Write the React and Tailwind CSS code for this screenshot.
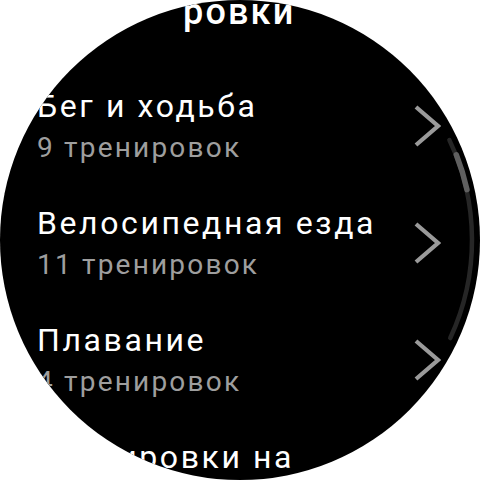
import React from "react";

const items = [
  { title: "Бег и ходьба", sub: "9 тренировок" },
  { title: "Велосипедная езда", sub: "11 тренировок" },
  { title: "Плавание", sub: "4 тренировок" },
  { title: "Тренировки на тренажерах", sub: "6 тренировок" },
];

function Chevron() {
  return (
    <svg width="28" height="44" viewBox="0 0 28 44" className="shrink-0 mt-[17px]">
      <polyline
        points="3,3 25,22 3,41"
        fill="none"
        stroke="#9a9a9a"
        strokeWidth="4.2"
        strokeLinejoin="miter"
        strokeLinecap="butt"
      />
    </svg>
  );
}

function arcPath(r, a0, a1) {
  const c = 240;
  const rad = (d) => (d * Math.PI) / 180;
  const x0 = c + r * Math.cos(rad(a0));
  const y0 = c + r * Math.sin(rad(a0));
  const x1 = c + r * Math.cos(rad(a1));
  const y1 = c + r * Math.sin(rad(a1));
  return `M ${x0} ${y0} A ${r} ${r} 0 0 1 ${x1} ${y1}`;
}

export default function App() {
  return (
    <div className="w-[480px] h-[480px] bg-white" style={{ fontFamily: "Roboto, 'Noto Sans', sans-serif" }}>
      <div className="relative w-[480px] h-[480px] rounded-full bg-black overflow-hidden">
        <div className="flex flex-col mt-[-10px]">
          <div className="pl-[183px] pr-[40px] text-white text-[36px] leading-[44px] font-medium tracking-[0.06em] h-[78px] whitespace-nowrap">
            ровки
          </div>
          {items.map((it) => (
            <div key={it.title} className="flex items-start justify-between gap-[4px] pl-[37px] pr-[39px] pt-[19px] h-[117px] shrink-0">
              <div className="flex flex-col flex-1 min-w-0">
                <div className="text-white text-[32px] leading-[38px] tracking-[2.6px]">{it.title}</div>
                <div className="text-[#9e9e9e] text-[28px] leading-[34px] tracking-[2.2px] mt-[6px] whitespace-nowrap">{it.sub}</div>
              </div>
              <Chevron />
            </div>
          ))}
        </div>
        <svg className="absolute inset-0 pointer-events-none" width="480" height="480" viewBox="0 0 480 480">
          <path d={arcPath(232, -25.5, 25)} fill="none" stroke="#262626" strokeWidth="4.5" strokeLinecap="round" />
          <path d={arcPath(232.5, -21.5, -12.5)} fill="none" stroke="#606060" strokeWidth="5.5" strokeLinecap="round" />
        </svg>
      </div>
    </div>
  );
}
